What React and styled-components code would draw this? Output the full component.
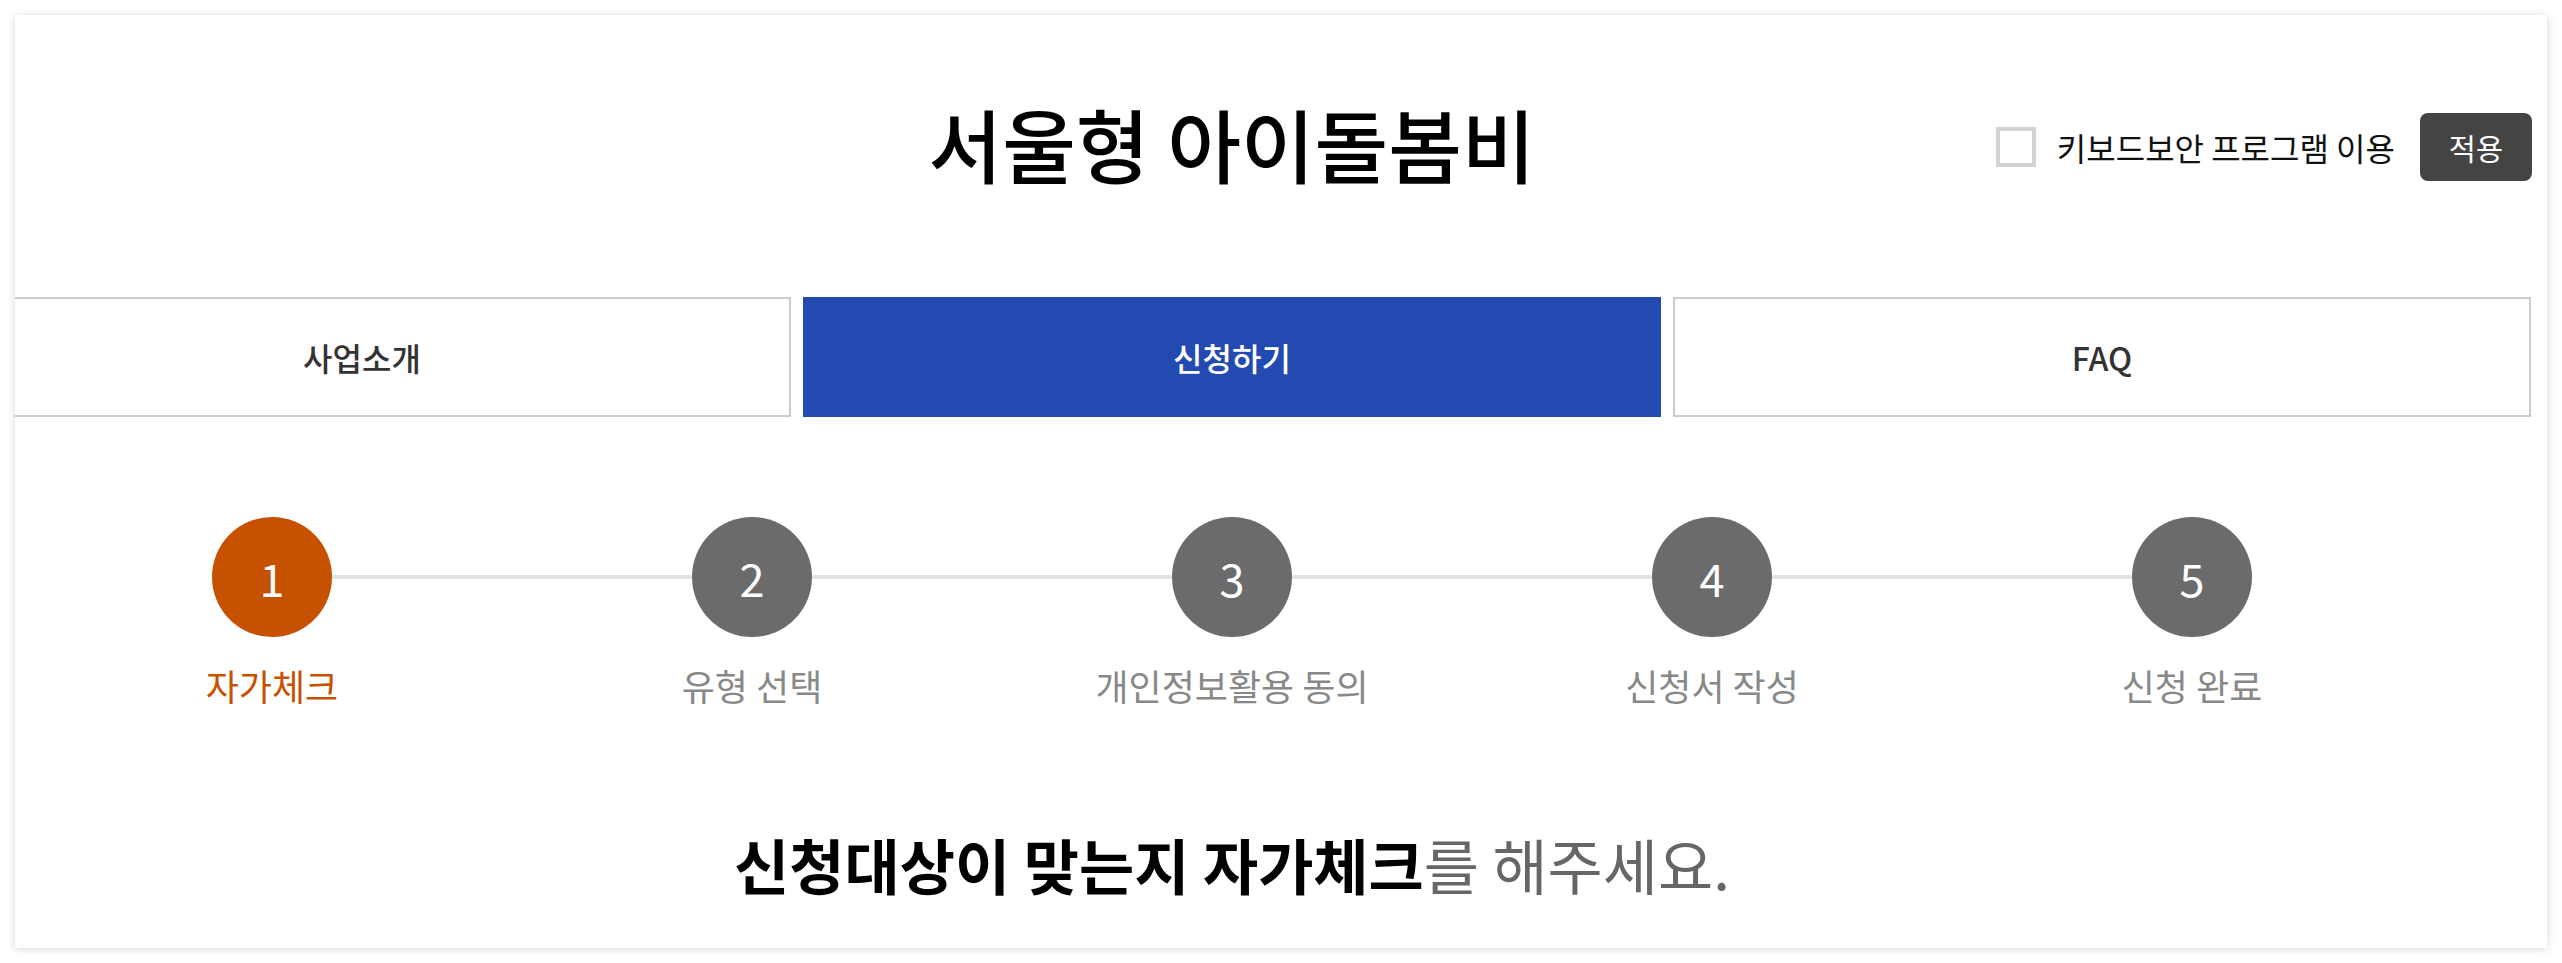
import React from "react";
import styled, { createGlobalStyle } from "styled-components";

const Global = createGlobalStyle`
  html, body { margin: 0; padding: 0; background: #fff; }
  body {
    padding: 15px;
    font-family: "Noto Sans CJK KR", "Noto Sans", sans-serif;
    color: #111;
  }
  * { box-sizing: border-box; }
`;

const Card = styled.main`
  background: #fff;
  box-shadow: 0 1px 8px rgba(0, 0, 0, 0.16);
  overflow: hidden;
  padding: 85px 98px 56px 0;
  height: 933px;
`;

const Header = styled.header`
  display: grid;
  grid-template-columns: 1fr auto 1fr;
  align-items: center;
`;

const Title = styled.h1`
  grid-column: 2;
  margin: 0;
  font-size: 80px;
  line-height: 84px;
  font-weight: 500;
  color: #000;
  white-space: nowrap;
`;

const SecureOption = styled.div`
  grid-column: 3;
  justify-self: end;
  margin-right: -83px;
  margin-top: 10px;
  display: flex;
  align-items: center;
`;

const CheckBox = styled.span`
  width: 40px;
  height: 40px;
  border: 4px solid #d3d3d3;
  background: #fff;
  margin-right: 21px;
`;

const CheckLabel = styled.label`
  font-size: 32px;
  line-height: 40px;
  color: #111;
  margin-right: 25px;
  white-space: nowrap;
`;

const ApplyButton = styled.button`
  width: 112px;
  height: 68px;
  border: 0;
  border-radius: 8px;
  background: #444;
  color: #fff;
  font-family: inherit;
  font-size: 29.5px;
  padding: 0;
`;

const Tabs = styled.nav`
  margin-top: 113px;
  display: flex;
  justify-content: center;
  gap: 12px;
`;

const Tab = styled.a`
  flex: 0 0 858px;
  height: 120px;
  display: flex;
  align-items: center;
  justify-content: center;
  border: 2px solid ${(p) => (p.$active ? "#234ab1" : "#cccccc")};
  background: ${(p) => (p.$active ? "#234ab1" : "#fff")};
  color: ${(p) => (p.$active ? "#fff" : "#333")};
  font-size: 32px;
  font-weight: 500;
  text-decoration: none;
`;

const Steps = styled.ol`
  list-style: none;
  margin: 100px auto 0;
  padding: 0;
  width: 2400px;
  display: flex;
  position: relative;
  &::before {
    content: "";
    position: absolute;
    left: 240px;
    right: 240px;
    top: 58px;
    height: 4px;
    background: #e2e2e2;
  }
`;

const Step = styled.li`
  flex: 0 0 480px;
  display: flex;
  flex-direction: column;
  align-items: center;
  position: relative;
`;

const Circle = styled.span`
  width: 120px;
  height: 120px;
  border-radius: 50%;
  background: ${(p) => (p.$active ? "#c65100" : "#6b6b6b")};
  color: #fff;
  display: flex;
  align-items: center;
  justify-content: center;
  font-size: 45px;
  line-height: 1;
`;

const StepLabel = styled.span`
  margin-top: 32px;
  font-size: 36px;
  line-height: 32px;
  color: ${(p) => (p.$active ? "#c65100" : "#888")};
  white-space: nowrap;
`;

const Lead = styled.p`
  margin: 135px 0 0;
  text-align: center;
  font-size: 60px;
  line-height: 56px;
  color: #666;
  white-space: nowrap;
`;

const Strong = styled.strong`
  color: #000;
  font-weight: 700;
`;

const steps = ["자가체크", "유형 선택", "개인정보활용 동의", "신청서 작성", "신청 완료"];

export default function App() {
  return (
    <>
      <Global />
      <Card>
        <Header>
          <Title>서울형 아이돌봄비</Title>
          <SecureOption>
            <CheckBox role="checkbox" aria-checked="false" />
            <CheckLabel>키보드보안 프로그램 이용</CheckLabel>
            <ApplyButton>적용</ApplyButton>
          </SecureOption>
        </Header>
        <Tabs>
          <Tab>사업소개</Tab>
          <Tab $active>신청하기</Tab>
          <Tab>FAQ</Tab>
        </Tabs>
        <Steps>
          {steps.map((s, i) => (
            <Step key={s}>
              <Circle $active={i === 0}>{i + 1}</Circle>
              <StepLabel $active={i === 0}>{s}</StepLabel>
            </Step>
          ))}
        </Steps>
        <Lead>
          <Strong>신청대상이 맞는지 자가체크</Strong>를 해주세요.
        </Lead>
      </Card>
    </>
  );
}
